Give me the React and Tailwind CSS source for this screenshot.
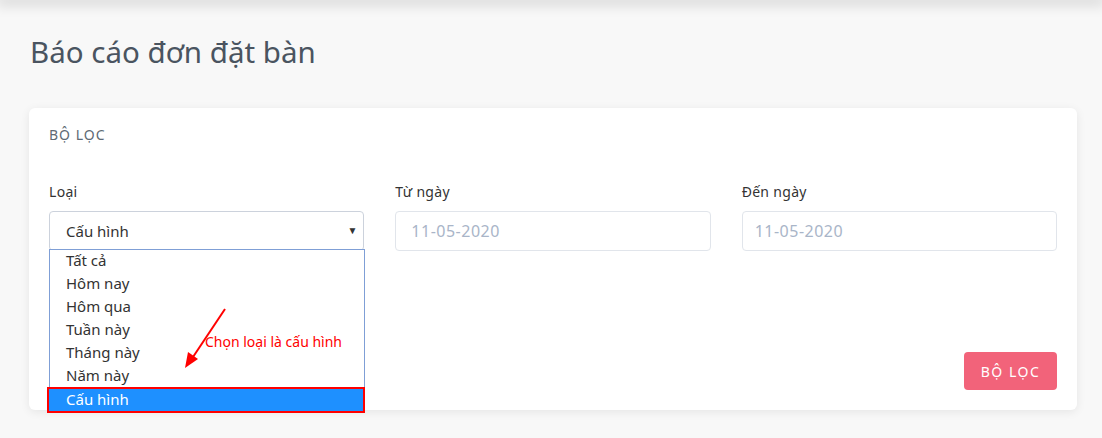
import React from "react";

const options = ["Tất cả", "Hôm nay", "Hôm qua", "Tuần này", "Tháng này", "Năm này"];

const App = () => {
  return (
    <div
      className="relative w-[1102px] h-[438px] overflow-hidden bg-[#f8f8f8]"
      style={{ fontFamily: "'Noto Sans', Lato, sans-serif" }}
    >
      {/* header shadow */}
      <div className="h-0 shadow-[0_0_14px_4px_rgba(0,0,0,0.18)]" />

      <div className="px-[29px]">
        <h1 className="pt-[30px] pl-[1px] text-[29.5px] leading-[44px] text-[#4a5460]">
          Báo cáo đơn đặt bàn
        </h1>

        {/* filter card */}
        <div className="relative mt-[34px] w-[1048px] h-[302px] bg-white rounded-md shadow-[0_2px_10px_rgba(0,0,0,0.08)] px-5 pt-[17px] flex flex-col">
          <div className="text-[14px] leading-5 text-[#606a75] tracking-[1px]">BỘ LỌC</div>

          <div className="mt-[37px] grid grid-cols-3 gap-x-[31px]">
            <div>
              <div className="text-[14px] leading-5 text-[#333] tracking-[0.3px]">Loại</div>
              <div className="relative mt-[9px] h-10 border border-[#ccd2dc] rounded-[4px] flex items-center pl-4 text-[15px] text-[#333]">
                Cấu hình
                <span className="absolute right-[6px] top-[11px] text-[10px] text-[#333]">▼</span>
              </div>
            </div>
            <div>
              <div className="text-[14px] leading-5 text-[#333] tracking-[0.3px]">Từ ngày</div>
              <div className="mt-[9px] h-10 border border-[#e1e5eb] rounded-[4px] flex items-center pl-[15px] text-[16px] text-[#a9b5c8] tracking-[0.5px]">
                11-05-2020
              </div>
            </div>
            <div>
              <div className="text-[14px] leading-5 text-[#333] tracking-[0.3px]">Đến ngày</div>
              <div className="mt-[9px] h-10 border border-[#e1e5eb] rounded-[4px] flex items-center pl-[12px] text-[16px] text-[#a9b5c8] tracking-[0.5px]">
                11-05-2020
              </div>
            </div>
          </div>

          <div className="mt-auto mb-5 flex justify-end">
            <button className="w-[93px] h-[38px] bg-[#f2637a] rounded-[4px] text-white text-[14px] tracking-[1.5px]">
              BỘ LỌC
            </button>
          </div>

          {/* open dropdown list */}
          <div className="absolute left-[20px] top-[141px] w-[316px] h-[162px] bg-white border border-[#7f9fd6] text-[15px] text-[#333]">
            {options.map((o) => (
              <div key={o} className="h-[23px] leading-[20px] pl-[16px]">
                {o}
              </div>
            ))}
            <div className="absolute left-[-3px] top-[137px] w-[318px] h-[26px] bg-[#1e90ff] border-2 border-[#ff0000] text-white leading-[20px] pl-[17px]">
              Cấu hình
            </div>
          </div>

          {/* annotation */}
          <svg className="absolute left-[150px] top-[196px]" width="60" height="70" viewBox="0 0 60 70">
            <line x1="46" y1="5" x2="12" y2="56" stroke="#ff0000" strokeWidth="2" />
            <polygon points="6,64 9,48 19,55" fill="#ff0000" />
          </svg>
          <div className="absolute left-[176px] top-[226px] text-[14px] leading-4 text-[#ff0000]">
            Chọn loại là cấu hình
          </div>
        </div>
      </div>
    </div>
  );
};

export default App;
